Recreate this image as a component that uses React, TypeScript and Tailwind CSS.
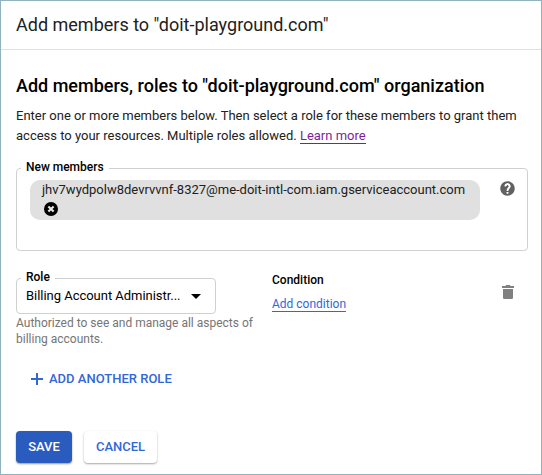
import React from "react";

function HelpIcon() {
  return (
    <svg width="15" height="15" viewBox="1.6 1.6 20.8 20.8" fill="#616161" aria-hidden="true">
      <path d="M12 2C6.48 2 2 6.48 2 12s4.48 10 10 10 10-4.48 10-10S17.52 2 12 2zm1 17h-2v-2h2v2zm2.07-7.75-.9.92C13.45 12.9 13 13.5 13 15h-2v-.5c0-1.1.45-2.1 1.17-2.83l1.24-1.26c.37-.36.59-.86.59-1.41 0-1.1-.9-2-2-2s-2 .9-2 2H8c0-2.21 1.79-4 4-4s4 1.79 4 4c0 .88-.36 1.680-.93 2.250z" stroke="none" />
      <path d="M9 9a3 3 0 1 1 4.700 2.400C12.500 12.500 12 13 12 15M12 17v2" fill="none" stroke="#fff" strokeWidth="2.4" />
    </svg>
  );
}

function RemoveIcon() {
  return (
    <svg width="14" height="14" viewBox="0 0 14 14" aria-hidden="true">
      <circle cx="7" cy="7" r="7" fill="#000" />
      <path d="M4.4 4.4l5.2 5.2M9.6 4.4l-5.2 5.2" stroke="#e8e8e8" strokeWidth="2.1" />
    </svg>
  );
}

function TrashIcon() {
  return (
    <svg width="12" height="14" viewBox="0 0 12 14" fill="#808080" aria-hidden="true">
      <path d="M0 1h3.300l.9-1h3.600l.9 1H12v2H0zM1 4h10v8.400c0 .9-.7 1.600-1.600 1.600H2.600C1.700 14 1 13.300 1 12.400z" />
    </svg>
  );
}

export default function App() {
  return (
    <div className="flex h-[475px] w-[542px] flex-col overflow-hidden border border-[#91b3bf] bg-white font-[Roboto,sans-serif] text-[13px] text-[#212121]">
      <header className="flex h-[49px] shrink-0 items-center border-b border-[#e0e0e0] pl-[15px]">
        <h1 className="whitespace-nowrap text-[18px] leading-6">Add members to "doit-playground.com"</h1>
      </header>
      <main className="flex flex-col pl-[15px] pr-[13px] pt-6">
        <h2 className="whitespace-nowrap text-[18px] font-medium leading-6 text-black">
          Add members, roles to "doit-playground.com" organization
        </h2>
        <p className="mt-2 whitespace-nowrap leading-5">
          Enter one or more members below. Then select a role for these members to grant them
          <br />
          access to your resources. Multiple roles allowed.{" "}
          <a className="inline-block border-b border-[#7b1fa2] leading-[15px] text-[#7b1fa2]">Learn more</a>
        </p>

        <fieldset className="mt-[14px] h-[91px] rounded border border-[#d0d0d0] pl-[13px] pr-3">
          <legend className="-ml-[9px] h-[17px] px-[5px] text-[12px] font-medium leading-[14px] tracking-[-0.02px] text-black">
            New members
          </legend>
          <div className="flex items-start justify-between pt-[3px]">
            <div className="h-10 w-[450px] rounded-[10px] bg-[#e0e0e0] pl-3">
              <div className="whitespace-nowrap pt-px leading-[18px]">
                jhv7wydpolw8devrvvnf-8327@me-doit-intl-com.iam.gserviceaccount.com
              </div>
              <button className="ml-[2px] mt-[3px] block" aria-label="Remove">
                <RemoveIcon />
              </button>
            </div>
            <span className="mt-px block">
              <HelpIcon />
            </span>
          </div>
        </fieldset>

        <div className="mt-[19px] flex h-[77px]">
          <div className="w-[256px]">
            <fieldset className="h-[44px] w-[200px] rounded border border-[#d0d0d0] pl-[9px] pr-[14px]">
              <legend className="-ml-[5px] h-[17px] px-[5px] text-[12px] font-medium leading-[14px] text-black">
                Role
              </legend>
              <div className="flex h-[18px] items-center justify-between text-black">
                <span className="whitespace-nowrap tracking-[-0.03px]">Billing Account Administr...</span>
                <svg width="10" height="5" viewBox="0 0 10 5" aria-hidden="true">
                  <path d="M0 0h10L5 5z" />
                </svg>
              </div>
            </fieldset>
            <p className="mt-px whitespace-nowrap text-[12px] leading-4 text-[#757575]">
              Authorized to see and manage all aspects of
              <br />
              billing accounts.
            </p>
          </div>
          <div className="flex flex-1 flex-col items-start pt-[2px] text-[12px]">
            <span className="font-medium leading-4 text-black">Condition</span>
            <a className="mt-[9px] border-b border-[#3367d6] leading-[14px] text-[#3367d6]">Add condition</a>
          </div>
          <button className="mr-[14px] mt-[15px] self-start" aria-label="Delete role">
            <TrashIcon />
          </button>
        </div>

        <button className="ml-[15px] mt-[24px] flex h-4 items-center self-start text-[13px] font-medium leading-4 text-[#3367d6]">
          <svg width="12" height="12" viewBox="0 0 12 12" aria-hidden="true">
            <path d="M6 0v12M0 6h12" stroke="#3367d6" strokeWidth="2" />
          </svg>
          <span className="ml-[6px] whitespace-nowrap">ADD ANOTHER ROLE</span>
        </button>
        <div className="mt-[44px] flex gap-3 text-[13px] font-medium">
          <button className="h-8 w-14 rounded bg-[#2a5bbf] text-white shadow-[0_1px_2px_rgba(0,0,0,0.4)]">SAVE</button>
          <button className="h-8 w-[73px] rounded bg-white text-[#3367d6] shadow-[0_1px_2px_rgba(0,0,0,0.35)]">CANCEL</button>
        </div>
      </main>
    </div>
  );
}
